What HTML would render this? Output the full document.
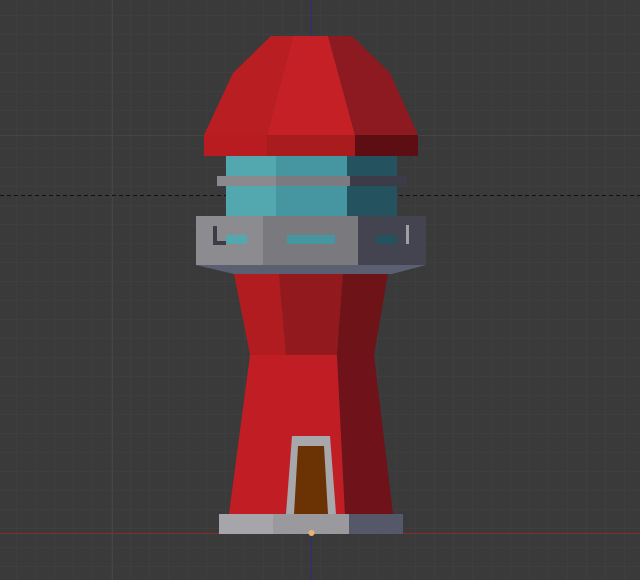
<!DOCTYPE html><html><head><style>html,body{margin:0;padding:0;background:#3a3a3a}svg{display:block}</style></head><body>
<svg width="640" height="580" viewBox="0 0 640 580" xmlns="http://www.w3.org/2000/svg">
<defs><pattern id="g" width="19" height="19" patternUnits="userSpaceOnUse" x="-2" y="-3"><path d="M19 0V19M0 19H19" stroke="#414141" stroke-width="1" fill="none"/></pattern></defs>
<rect width="640" height="580" fill="#3a3a3a"/>
<rect width="640" height="580" fill="url(#g)"/>
<line x1="112.5" y1="0" x2="112.5" y2="580" stroke="#454545"/>
<line x1="0" y1="135.5" x2="640" y2="135.5" stroke="#454545"/>
<line x1="0" y1="195.5" x2="640" y2="195.5" stroke="#111" stroke-dasharray="4,3"/>
<line x1="0" y1="533.5" x2="640" y2="533.5" stroke="#8a2a2a"/>
<line x1="311.5" y1="0" x2="311.5" y2="580" stroke="#2c2c80"/>
<!-- roof -->
<polygon points="271,36 293,36 267,135 204,135 233,73" fill="#b81e22"/>
<polygon points="293,36 328,36 355,135 267,135" fill="#c42026"/>
<polygon points="328,36 352,36 390,73 418,135 355,135" fill="#8c1a20"/>
<rect x="204" y="135" width="63" height="21" fill="#b81c20"/>
<rect x="267" y="135" width="88" height="21" fill="#a81c1e"/>
<rect x="355" y="135" width="63" height="21" fill="#5c0e12"/>
<!-- glass -->
<rect x="226" y="156" width="50" height="60" fill="#52a8ae"/>
<rect x="276" y="156" width="71" height="60" fill="#4596a0"/>
<rect x="347" y="156" width="50" height="60" fill="#24525f"/>
<rect x="217" y="176" width="59" height="10" fill="#8a8a8e"/>
<rect x="276" y="176" width="74" height="10" fill="#7a7a80"/>
<rect x="350" y="176" width="57" height="10" fill="#3c3c48"/>
<!-- gallery -->
<rect x="196" y="216" width="67" height="49" fill="#8c8c90"/>
<rect x="263" y="216" width="95" height="49" fill="#7a7a7e"/>
<rect x="358" y="216" width="68" height="49" fill="#444450"/>
<polygon points="196,265 426,265 392,274 234,274" fill="#5a5f72"/>
<path d="M213 226h4v15h9v4h-13z" fill="#3c3c48"/>
<rect x="226" y="235" width="21" height="9" fill="#52a8ae"/>
<rect x="287" y="235" width="48" height="9" fill="#4596a0"/>
<rect x="376" y="235" width="21" height="9" fill="#24525f"/>
<rect x="406" y="225" width="3" height="19" fill="#a0a0a4"/>
<!-- upper body -->
<polygon points="234,274 279,274 286,355 250,355" fill="#b01c20"/>
<polygon points="279,274 343,274 337,355 286,355" fill="#921a1e"/>
<polygon points="343,274 388,274 374,355 337,355" fill="#6e1418"/>
<!-- lower body -->
<polygon points="250,355 337,355 345,514 229,514" fill="#c01e24"/>
<polygon points="337,355 374,355 393,514 345,514" fill="#70121a"/>
<!-- door -->
<polygon points="292,436 330,436 336,514 286,514" fill="#a8a8ac"/>
<polygon points="298,446 324,446 328,514 294,514" fill="#6b3304"/>
<!-- base -->
<rect x="219" y="514" width="54" height="20" fill="#a6a6aa"/>
<rect x="273" y="514" width="76" height="20" fill="#9a9a9e"/>
<rect x="349" y="514" width="54" height="20" fill="#545868"/>
<circle cx="311.5" cy="533" r="3" fill="#f0b070"/>
</svg>
</body></html>
